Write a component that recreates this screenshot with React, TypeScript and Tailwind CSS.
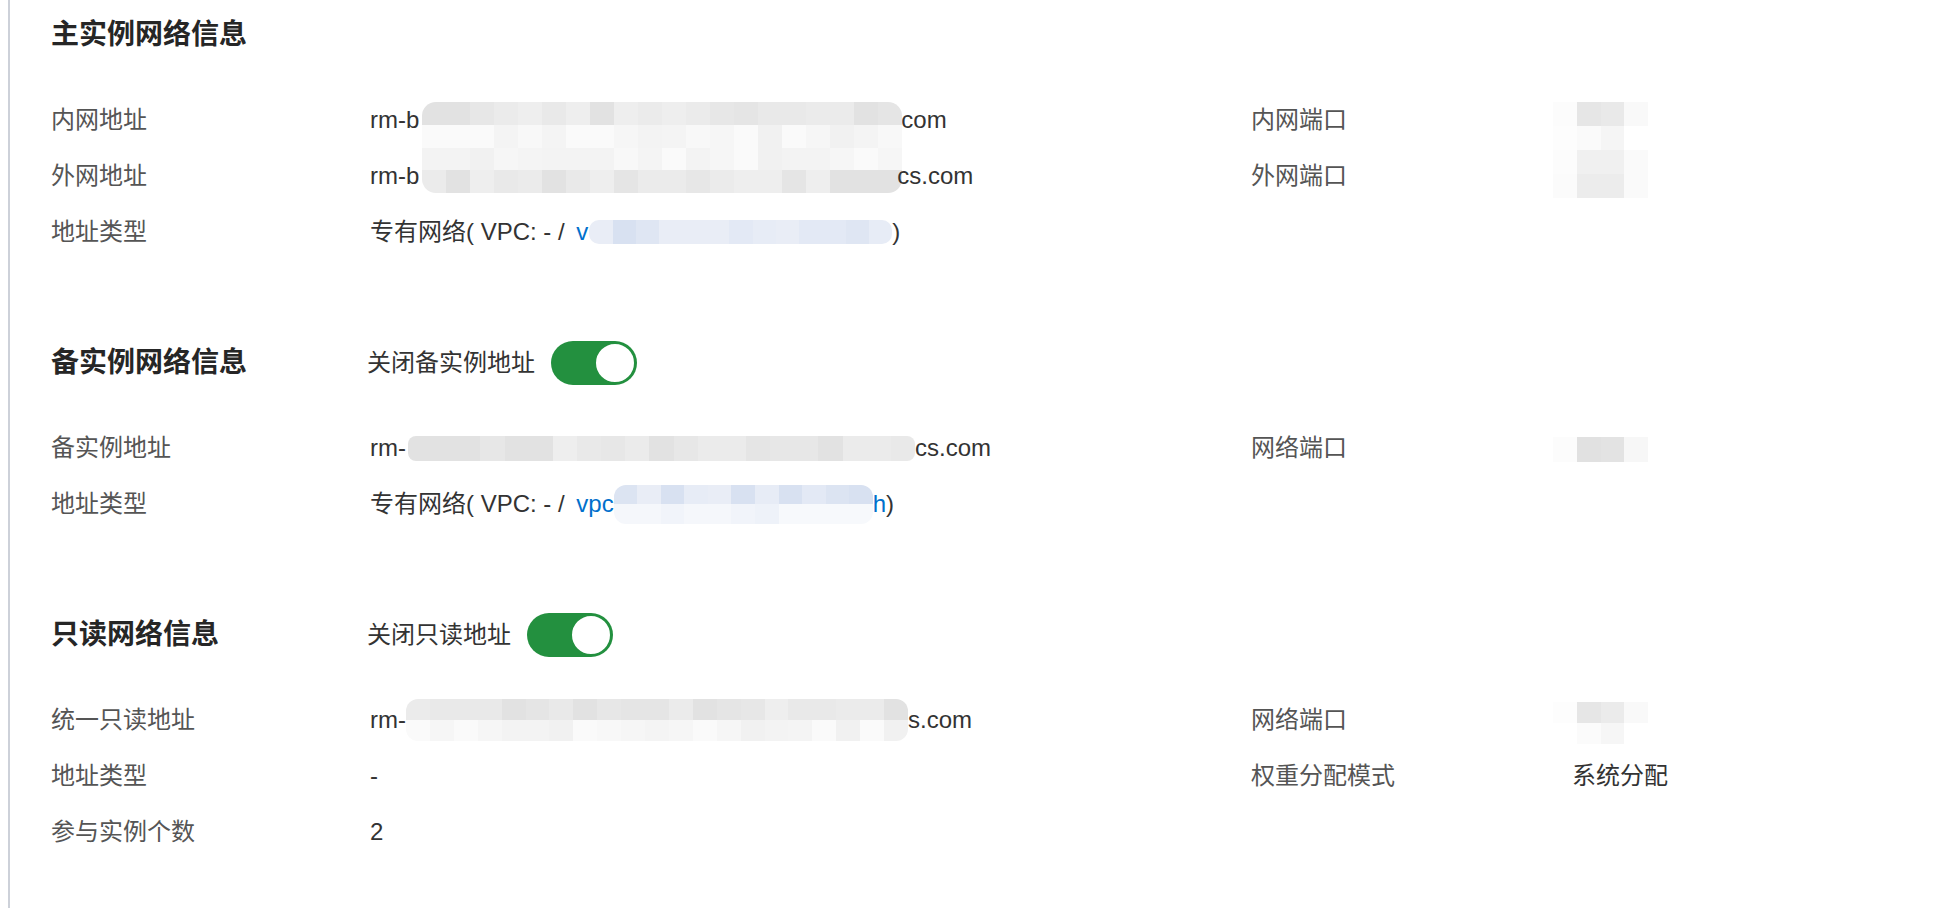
import React from 'react';

const DARK = ['bg-[#e5e5e5]', 'bg-[#e9e9e9]', 'bg-[#ebebeb]', 'bg-[#e7e7e7]', 'bg-[#eeeeee]', 'bg-[#e2e2e2]'];
const LIGHT = ['bg-[#f3f3f3]', 'bg-[#f6f6f6]', 'bg-[#f8f8f8]', 'bg-[#f4f4f4]', 'bg-[#fafafa]', 'bg-[#f1f1f1]'];
const BLUE = ['bg-[#dfe6f3]', 'bg-[#e7ecf6]', 'bg-[#d8e1f1]', 'bg-[#e3e9f5]', 'bg-[#dce4f2]', 'bg-[#e9edf6]'];
const BLUE_LIGHT = ['bg-[#f1f4fa]', 'bg-[#f5f7fb]', 'bg-[#eef2f9]', 'bg-[#f7f9fc]'];

// tiny deterministic generator so the mosaic looks the same on every render
const pick = (palette: string[], seed: number, i: number, j: number) => {
    const n = Math.abs(Math.sin(seed * 97.13 + i * 12.9898 + j * 78.233) * 43758.5453);
    return palette[Math.floor((n - Math.floor(n)) * palette.length)];
};

interface MosaicProps {
    cols: number;
    rows: string[][];
    seed: number;
    className: string;
}

const Mosaic: React.FC<MosaicProps> = ({ cols, rows, seed, className }) => (
    <span className={`flex flex-col overflow-hidden ${className}`}>
        {rows.map((palette, r) => (
            <span key={r} className="flex flex-1">
                {Array.from({ length: cols }).map((_, c) => (
                    <span key={c} className={`flex-1 ${pick(palette, seed, r, c)}`} />
                ))}
            </span>
        ))}
    </span>
);

// port blur: first column almost white, then three grey cells
const PortMosaic: React.FC<{ rows: string[][]; className: string }> = ({ rows, className }) => (
    <span className={`flex flex-col ${className}`}>
        {rows.map((row, r) => (
            <span key={r} className="flex flex-1">
                {row.map((cls, c) => (
                    <span key={c} className={`flex-1 ${cls}`} />
                ))}
            </span>
        ))}
    </span>
);

const Toggle: React.FC = () => (
    <button className="relative w-[86px] h-[44px] rounded-full bg-[#23903f] shrink-0">
        <span className="absolute right-[1px] top-[1px] w-[42px] h-[42px] rounded-full bg-white border-2 border-[#23903f]" />
    </button>
);

interface RowProps {
    label: string;
    value: React.ReactNode;
    label2?: string;
    value2?: React.ReactNode;
}

const Row: React.FC<RowProps> = ({ label, value, label2, value2 }) => (
    <div className="flex items-center h-[56px]">
        <div className="w-[319px] shrink-0 text-[#555555]">{label}</div>
        <div className="w-[881px] shrink-0 relative flex items-center text-[#333333] whitespace-nowrap">{value}</div>
        {label2 && <div className="w-[321px] shrink-0 text-[#555555]">{label2}</div>}
        {value2 && <div className="flex-1 relative flex items-center text-[#333333]">{value2}</div>}
    </div>
);

const Title: React.FC<{ text: string; toggle?: string }> = ({ text, toggle }) => (
    <div className="flex items-center h-[70px]">
        <h2 className="w-[316px] shrink-0 text-[28px] font-bold text-[#262626] leading-[40px]">{text}</h2>
        {toggle && (
            <div className="flex items-center gap-4">
                <span className="text-[#333333]">{toggle}</span>
                <Toggle />
            </div>
        )}
    </div>
);

const Vpc: React.FC<{ children: React.ReactNode }> = ({ children }) => (
    <>
        <span className="mr-[5px]">{'专有网络( VPC: - /\u00a0'}</span>
        {children}
        <span>)</span>
    </>
);

const App: React.FC = () => {
    return (
        <div className="min-h-screen bg-white pl-[8px] font-['Liberation_Sans','Noto_Sans_CJK_SC',sans-serif] text-[24px] leading-[32px]">
            <div className="min-h-screen border-l-2 border-[#cdd1d9] pl-[41px]">
                {/* 主实例 */}
                <section>
                    <Title text="主实例网络信息" />
                    <div className="mt-[22px]">
                        <Row
                            label="内网地址"
                            value={
                                <>
                                    <span>rm-b</span>
                                    <span className="inline-block w-[482px]" />
                                    <span>com</span>
                                    <Mosaic
                                        cols={20}
                                        rows={[DARK, LIGHT, LIGHT, DARK]}
                                        seed={1}
                                        className="absolute left-[52px] top-[-2px] w-[480px] h-[91px] rounded-[14px]"
                                    />
                                </>
                            }
                            label2="内网端口"
                            value2={
                                <PortMosaic
                                    className="absolute left-[-19px] top-[-18px] w-[95px] h-[96px]"
                                    rows={[
                                        ['bg-[#fcfcfc]', 'bg-[#e6e6e6]', 'bg-[#e9e9e9]', 'bg-[#f9f9f9]'],
                                        ['bg-[#fdfdfd]', 'bg-[#fafafa]', 'bg-[#f5f5f5]', 'bg-white'],
                                        ['bg-[#fcfcfc]', 'bg-[#f0f0f0]', 'bg-[#f0f0f0]', 'bg-[#fafafa]'],
                                        ['bg-[#fbfbfb]', 'bg-[#ececec]', 'bg-[#ececec]', 'bg-[#fafafa]'],
                                    ]}
                                />
                            }
                        />
                        <Row
                            label="外网地址"
                            value={
                                <>
                                    <span>rm-b</span>
                                    <span className="inline-block w-[478px]" />
                                    <span>cs.com</span>
                                </>
                            }
                            label2="外网端口"
                            value2={<span>&nbsp;</span>}
                        />
                        <Row
                            label="地址类型"
                            value={
                                <Vpc>
                                    <span className="text-[#0070cc]">v</span>
                                    <Mosaic cols={13} rows={[BLUE]} seed={3} className="w-[303px] h-[24px] rounded-[10px] ml-[1px]" />
                                </Vpc>
                            }
                        />
                    </div>
                </section>

                {/* 备实例 */}
                <section className="mt-[68px]">
                    <Title text="备实例网络信息" toggle="关闭备实例地址" />
                    <div className="mt-[22px]">
                        <Row
                            label="备实例地址"
                            value={
                                <>
                                    <span>rm-</span>
                                    <Mosaic cols={21} rows={[DARK]} seed={5} className="w-[507px] h-[25px] rounded-[8px] ml-[2px]" />
                                    <span>cs.com</span>
                                </>
                            }
                            label2="网络端口"
                            value2={
                                <PortMosaic
                                    className="absolute left-[-19px] top-[-11px] w-[95px] h-[25px]"
                                    rows={[['bg-[#fcfcfc]', 'bg-[#e1e1e1]', 'bg-[#e3e3e3]', 'bg-[#f7f7f7]']]}
                                />
                            }
                        />
                        <Row
                            label="地址类型"
                            value={
                                <Vpc>
                                    <span className="text-[#0070cc]">vpc</span>
                                    <Mosaic cols={11} rows={[BLUE, BLUE_LIGHT]} seed={7} className="w-[259px] h-[39px] rounded-[12px]" />
                                    <span className="text-[#0070cc]">h</span>
                                </Vpc>
                            }
                        />
                    </div>
                </section>

                {/* 只读 */}
                <section className="mt-[68px]">
                    <Title text="只读网络信息" toggle="关闭只读地址" />
                    <div className="mt-[22px]">
                        <Row
                            label="统一只读地址"
                            value={
                                <>
                                    <span>rm-</span>
                                    <Mosaic cols={21} rows={[DARK, LIGHT]} seed={9} className="w-[502px] h-[42px] rounded-[12px]" />
                                    <span>s.com</span>
                                </>
                            }
                            label2="网络端口"
                            value2={
                                <PortMosaic
                                    className="absolute left-[-19px] top-[-18px] w-[95px] h-[42px]"
                                    rows={[
                                        ['bg-[#fdfdfd]', 'bg-[#e6e6e6]', 'bg-[#ebebeb]', 'bg-[#f9f9f9]'],
                                        ['bg-white', 'bg-[#fbfbfb]', 'bg-[#f6f6f6]', 'bg-white'],
                                    ]}
                                />
                            }
                        />
                        <Row label="地址类型" value="-" label2="权重分配模式" value2="系统分配" />
                        <Row label="参与实例个数" value="2" />
                    </div>
                </section>
            </div>
        </div>
    );
};

export default App;
